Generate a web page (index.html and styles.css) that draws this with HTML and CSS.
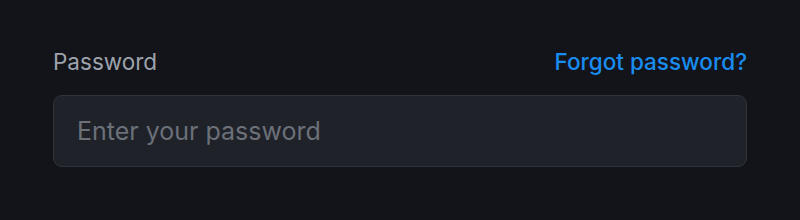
FILE: index.html
```html
<!DOCTYPE html>
<html lang="en">
<head>
    <meta charset="UTF-8">
    <meta name="viewport" content="width=device-width, initial-scale=1.0">
    <title>Password Field</title>
    <link rel="stylesheet" href="styles.css">
</head>
<body>
    <main>
        <div class="field">
            <div class="field-header">
                <label for="password">Password</label>
                <a href="#" class="forgot-link">Forgot password?</a>
            </div>
            <input type="password" id="password" name="password" placeholder="Enter your password">
        </div>
    </main>
</body>
</html>
```

FILE: styles.css
```css
* {
    margin: 0;
    padding: 0;
    box-sizing: border-box;
    font-family: Inter, 'Noto Sans', sans-serif;
}

html, body {
    width: 100%;
    height: 100%;
    background-color: #12141a;
}

main {
    padding: 48px 53px;
}

.field-header {
    display: flex;
    justify-content: space-between;
    align-items: center;
    margin-bottom: 19px;
}

.field-header label {
    color: #9ea3ad;
    font-size: 22.5px;
    font-weight: 400;
    line-height: 28px;
}

.forgot-link {
    color: #1a8cf0;
    font-size: 22.5px;
    font-weight: 500;
    line-height: 28px;
    text-decoration: none;
}

.field input {
    width: 100%;
    height: 72px;
    padding: 0 23px;
    background-color: #1f2229;
    border: 1px solid #30333b;
    border-radius: 9px;
    color: #e6e8eb;
    font-size: 25px;
    outline: none;
}

.field input::placeholder {
    color: #6b7079;
}
```
